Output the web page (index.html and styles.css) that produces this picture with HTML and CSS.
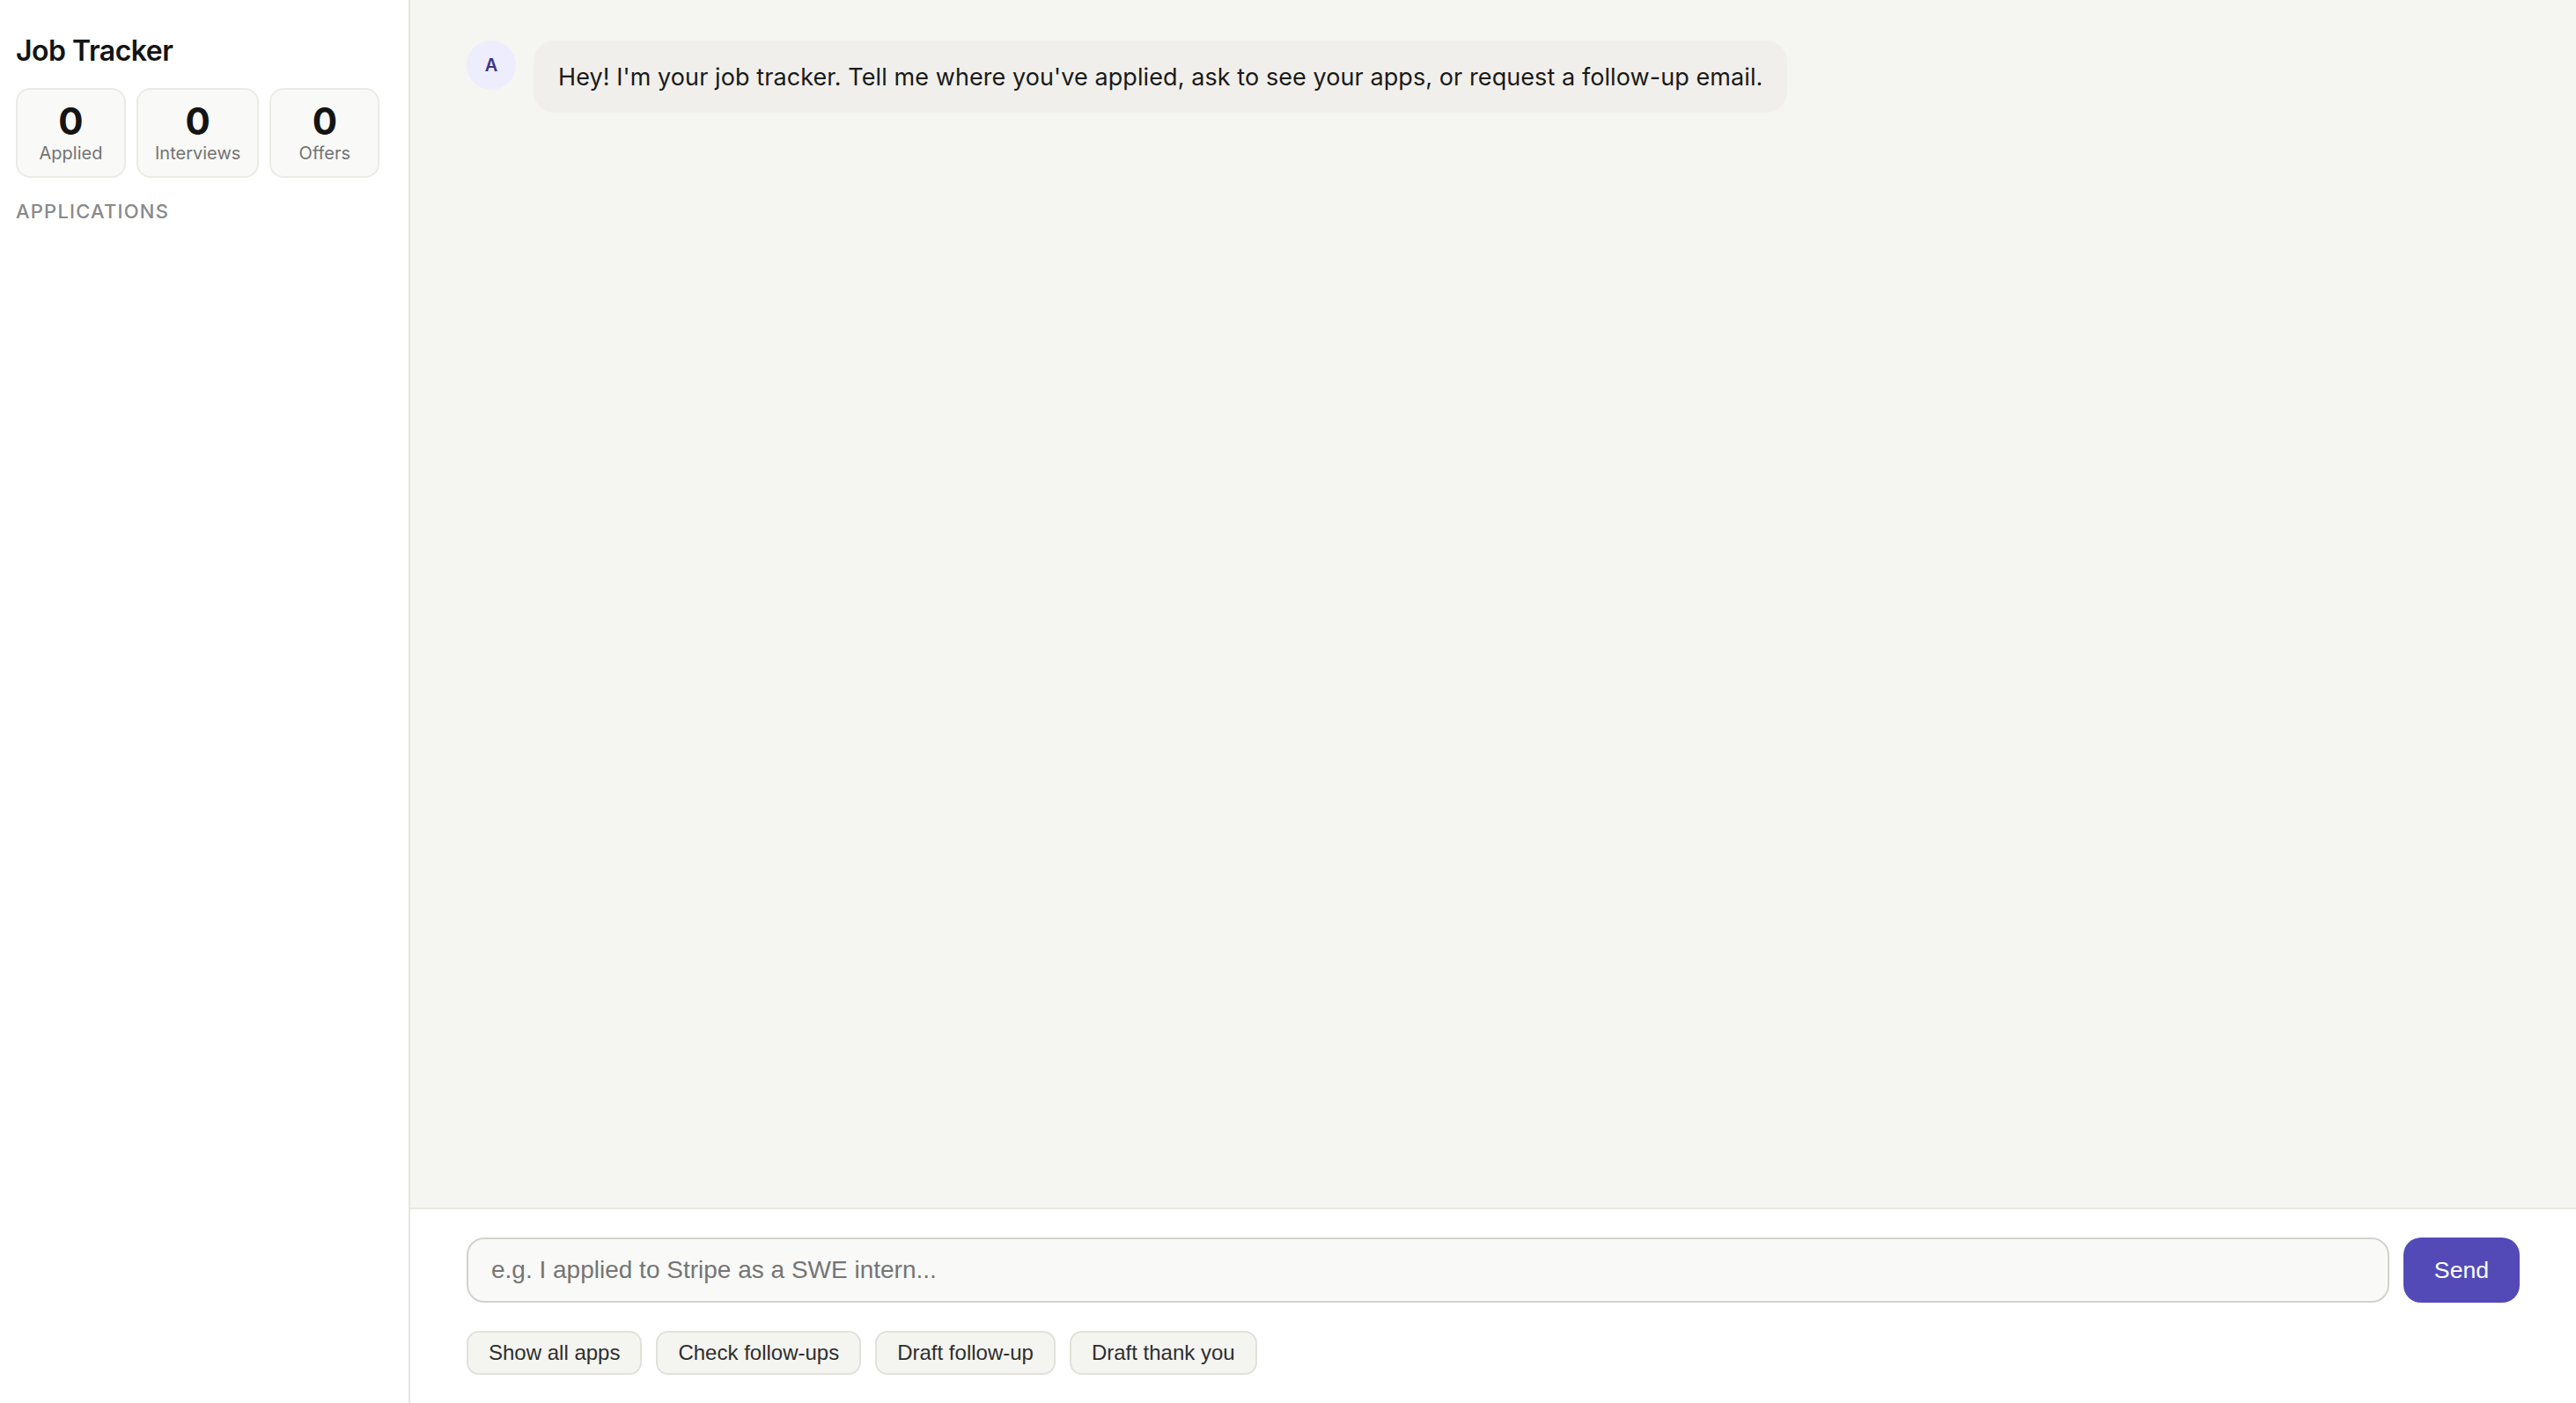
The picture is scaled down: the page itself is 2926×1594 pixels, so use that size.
FILE: index.html
```html
<!DOCTYPE html>
<html lang="en">
<head>
<meta charset="utf-8">
<title>Job Tracker</title>
<link rel="stylesheet" href="styles.css">
</head>
<body>
<div class="app">
  <aside class="sidebar">
    <h1 class="title">Job Tracker</h1>
    <div class="stats">
      <div class="stat"><div class="stat-num">0</div><div class="stat-label">Applied</div></div>
      <div class="stat"><div class="stat-num">0</div><div class="stat-label">Interviews</div></div>
      <div class="stat"><div class="stat-num">0</div><div class="stat-label">Offers</div></div>
    </div>
    <div class="section-label">APPLICATIONS</div>
  </aside>
  <main class="main">
    <div class="messages">
      <div class="msg">
        <div class="avatar">A</div>
        <div class="bubble">Hey! I'm your job tracker. Tell me where you've applied, ask to see your apps, or request a follow-up email.</div>
      </div>
    </div>
    <div class="composer">
      <div class="input-row">
        <input class="input" type="text" placeholder="e.g. I applied to Stripe as a SWE intern...">
        <button class="send">Send</button>
      </div>
      <div class="chips">
        <button class="chip">Show all apps</button>
        <button class="chip">Check follow-ups</button>
        <button class="chip">Draft follow-up</button>
        <button class="chip">Draft thank you</button>
      </div>
    </div>
  </main>
</div>
</body>
</html>
```
FILE: styles.css
```css
* { box-sizing: border-box; }
html, body { margin: 0; padding: 0; height: 100%; }
body {
  font-family: Inter, "Noto Sans", "DejaVu Sans", sans-serif;
  color: #1a1a1a;
  background: #ffffff;
}
.app {
  display: flex;
  height: 100vh;
}
.sidebar {
  width: 466px;
  flex: none;
  border-right: 2px solid #e6e6e1;
  background: #ffffff;
  padding: 39px 18px;
}
.title {
  margin: 0;
  font-size: 32px;
  line-height: 38px;
  font-weight: 600;
  color: #141414;
  letter-spacing: -0.5px;
}
.stats {
  display: flex;
  gap: 12px;
  margin-top: 23px;
}
.stat {
  min-width: 125px;
  padding: 14px 19px 14px;
  border: 2px solid #ebebe6;
  border-radius: 16px;
  background: #f9f9f7;
  text-align: center;
}
.stat-num {
  font-size: 42px;
  line-height: 44px;
  font-weight: 700;
  color: #141414;
}
.stat-label {
  margin-top: 2px;
  font-size: 20px;
  line-height: 24px;
  color: #737373;
}
.section-label {
  margin-top: 25px;
  font-size: 22px;
  line-height: 26px;
  font-weight: 500;
  letter-spacing: 1.2px;
  color: #8a8a8a;
}
.main {
  flex: 1;
  display: flex;
  flex-direction: column;
  min-width: 0;
}
.messages {
  flex: 1;
  background: #f5f5f1;
  padding: 46px 64px;
}
.msg {
  display: flex;
  align-items: flex-start;
  gap: 20px;
}
.avatar {
  width: 56px;
  height: 56px;
  flex: none;
  border-radius: 50%;
  background: #eeedfe;
  color: #3c3489;
  font-size: 20px;
  font-weight: 600;
  display: flex;
  align-items: center;
  justify-content: center;
}
.bubble {
  background: #f0efeb;
  border-radius: 24px;
  padding: 21px 28px 19px;
  font-size: 27px;
  line-height: 42px;
  letter-spacing: 0.08px;
  color: #1a1a1a;
}
.composer {
  border-top: 2px solid #e8e8e3;
  background: #ffffff;
  padding: 32px 64px;
}
.input-row {
  display: flex;
  gap: 16px;
}
.input {
  flex: 1;
  height: 74px;
  border: 2px solid #d2d2ce;
  border-radius: 20px;
  background: #f9f9f7;
  padding: 0 26px;
  font-family: "Liberation Sans", Arial, sans-serif;
  font-size: 28px;
  color: #1a1a1a;
  outline: none;
}
.input::placeholder {
  color: #757575;
}
.send {
  width: 132px;
  height: 74px;
  flex: none;
  border: none;
  border-radius: 20px;
  background: #534ab7;
  color: #ffffff;
  font-family: "Liberation Sans", Arial, sans-serif;
  font-size: 26.67px;
}
.chips {
  display: flex;
  gap: 16px;
  margin-top: 32px;
}
.chip {
  height: 50px;
  padding: 0 23px;
  border: 2px solid #e2e1dc;
  border-radius: 14px;
  background: #f4f4f0;
  font-family: "Liberation Sans", Arial, sans-serif;
  font-size: 24px;
  color: #2e2e2e;
}
```
